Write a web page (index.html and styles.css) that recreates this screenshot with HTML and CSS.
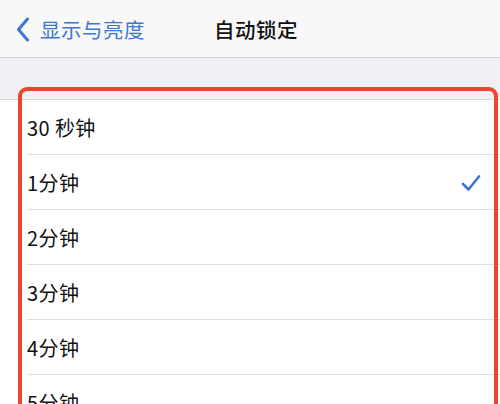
FILE: index.html
```html
<!DOCTYPE html>
<html lang="zh">
<head>
<meta charset="utf-8">
<link rel="stylesheet" href="styles.css">
</head>
<body>
<div class="screen">
  <header class="nav">
    <div class="back">
      <svg class="chev" width="14" height="25" viewBox="0 0 14 25"><path d="M11.5 2 L2.5 12.5 L11.5 23" fill="none" stroke="#3d76d6" stroke-width="3" stroke-linecap="round" stroke-linejoin="round"/></svg>
      <span class="back-label">显示与亮度</span>
    </div>
    <div class="title">自动锁定</div>
  </header>
  <div class="gap"></div>
  <div class="list">
    <div class="row"><span class="label">30 秒钟</span></div>
    <div class="row"><span class="label">1分钟</span>
      <svg class="check" width="20" height="18" viewBox="0 0 20 18"><path d="M2 10 L7.5 15.5 L18 2.5" fill="none" stroke="#3d76d6" stroke-width="2.6" stroke-linecap="round" stroke-linejoin="round"/></svg>
    </div>
    <div class="row"><span class="label">2分钟</span></div>
    <div class="row"><span class="label">3分钟</span></div>
    <div class="row"><span class="label">4分钟</span></div>
    <div class="row"><span class="label">5分钟</span></div>
  </div>
  <div class="highlight"></div>
</div>
</body>
</html>
```
FILE: styles.css
```css
* { box-sizing: border-box; }
html, body { margin: 0; padding: 0; }
body {
  width: 500px;
  height: 404px;
  overflow: hidden;
  background: #ffffff;
  font-family: "Noto Sans CJK SC", "Noto Sans", sans-serif;
}
.screen {
  position: relative;
  width: 500px;
  height: 404px;
  overflow: hidden;
}
.nav {
  position: relative;
  height: 58px;
  background: #f8f8f8;
  border-bottom: 1px solid #d2d2d6;
  display: flex;
  align-items: center;
}
.back {
  display: flex;
  align-items: center;
  gap: 10px;
  padding-left: 16px;
  color: #3d76d6;
  font-size: 20.5px;
}
.chev { margin-top: 1px; }
.back-label { letter-spacing: 0.5px; }
.title {
  position: absolute;
  left: 214px;
  top: 0;
  height: 57px;
  display: flex;
  align-items: center;
  font-size: 20.5px;
  font-weight: 500;
  color: #111;
  letter-spacing: 0.5px;
}
.gap {
  height: 42px;
  background: #efeff4;
  border-bottom: 1px solid #d8d8dc;
}
.list {
  background: #ffffff;
  padding-left: 27px;
}
.row {
  height: 55px;
  border-bottom: 1px solid #dedee2;
  display: flex;
  align-items: center;
  justify-content: space-between;
  padding-right: 19px;
  font-size: 20px;
  color: #111;
}
.label { letter-spacing: 0.4px; }
.check { margin-top: 2px; }
.highlight {
  position: absolute;
  left: 18px;
  top: 87px;
  width: 480px;
  height: 360px;
  border: 4.5px solid #e9452f;
  border-radius: 9px;
}
```
